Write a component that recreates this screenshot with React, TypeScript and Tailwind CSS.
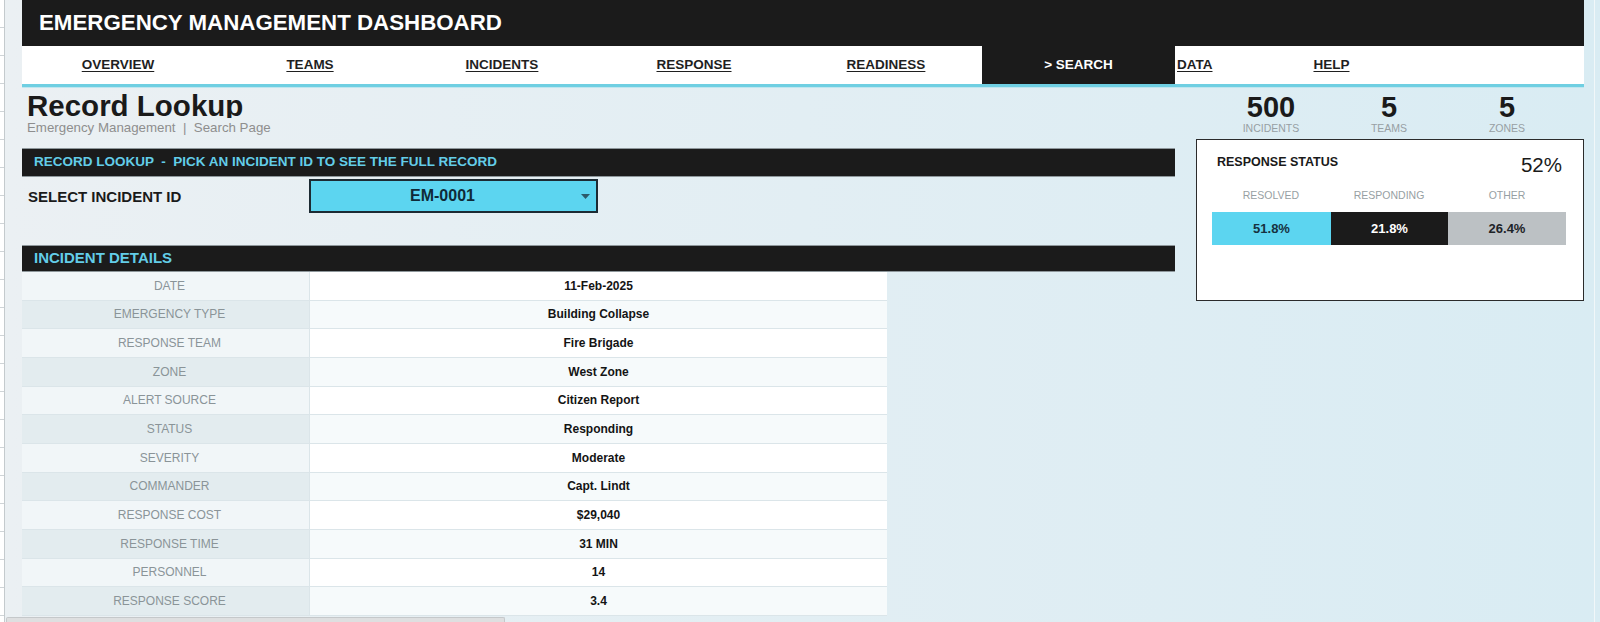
import React from 'react';

const NAV = [
  { label: 'OVERVIEW', w: 'w-[192px]', align: 'justify-center' },
  { label: 'TEAMS', w: 'w-[192px]', align: 'justify-center' },
  { label: 'INCIDENTS', w: 'w-[192px]', align: 'justify-center' },
  { label: 'RESPONSE', w: 'w-[192px]', align: 'justify-center' },
  { label: 'READINESS', w: 'w-[192px]', align: 'justify-center' },
];

const DETAILS = [
  ['DATE', '11-Feb-2025'],
  ['EMERGENCY TYPE', 'Building Collapse'],
  ['RESPONSE TEAM', 'Fire Brigade'],
  ['ZONE', 'West Zone'],
  ['ALERT SOURCE', 'Citizen Report'],
  ['STATUS', 'Responding'],
  ['SEVERITY', 'Moderate'],
  ['COMMANDER', 'Capt. Lindt'],
  ['RESPONSE COST', '$29,040'],
  ['RESPONSE TIME', '31 MIN'],
  ['PERSONNEL', '14'],
  ['RESPONSE SCORE', '3.4'],
];

const KPIS = [
  { value: '500', label: 'INCIDENTS' },
  { value: '5', label: 'TEAMS' },
  { value: '5', label: 'ZONES' },
];

function SectionBar({ title, className }: { title: string; className: string }) {
  return (
    <div
      className={`flex items-center border-y border-[#8e979b] bg-[#1b1b1b] pl-[12px] font-bold text-[#63cde8] whitespace-pre ${className}`}
    >
      {title}
    </div>
  );
}

export default function App() {
  return (
    <div className="relative flex h-[622px] w-[1600px] overflow-hidden bg-[#dcebf1] font-['Liberation_Sans',Arial,sans-serif]">
      {/* spreadsheet gutter */}
      <div className="h-full w-[5px] shrink-0 border-r border-[#c4cacd] bg-white bg-[repeating-linear-gradient(to_bottom,transparent_0px,transparent_27px,#cfd4d7_27px,#cfd4d7_28px)]" />

      <div className="h-full flex-1 bg-linear-to-r from-[#ebf0f3] to-[#d9ecf3]">
        <div className="h-full w-[1590px] border-r border-[#f1f7f9] pl-[17px]">
          <div className="w-[1562px]">
            {/* header */}
            <div className="flex h-[46px] items-center bg-[#1b1b1b] pl-[17px] text-[22.3px] font-bold text-white">
              EMERGENCY MANAGEMENT DASHBOARD
            </div>

            {/* nav */}
            <div className="flex h-[38px] bg-white text-[13.5px] font-bold text-[#1f1f1f]">
              {NAV.map(n => (
                <div key={n.label} className={`flex items-center ${n.w} ${n.align}`}>
                  <span className="underline underline-offset-2">{n.label}</span>
                </div>
              ))}
              <div className="flex w-[193px] items-center justify-center bg-[#1b1b1b] text-white">
                &gt; SEARCH
              </div>
              <div className="flex w-[77px] items-center pl-[2px]">
                <span className="underline underline-offset-2">DATA</span>
              </div>
              <div className="flex w-[159px] items-center justify-center">
                <span className="underline underline-offset-2">HELP</span>
              </div>
              <div className="flex-1" />
            </div>
            <div className="h-[3px] bg-[#6fcfe2]" />
            <div className="h-[1px] bg-[#bfe6ef]" />

            {/* body */}
            <div className="flex">
              {/* left column */}
              <div className="w-[1153px]">
                <div className="h-[30px] overflow-hidden pl-[5px] text-[29.5px] font-bold leading-[36px] text-[#1a1a1a]">
                  Record Lookup
                </div>
                <div className="mt-[2px] h-[16px] pl-[5px] text-[13.3px] leading-[16px] text-[#8e8e8e] whitespace-pre">
                  Emergency Management  |  Search Page
                </div>

                <SectionBar
                  title="RECORD LOOKUP  -  PICK AN INCIDENT ID TO SEE THE FULL RECORD"
                  className="mt-[12px] h-[29px] text-[13.5px]"
                />

                <div className="flex h-[68px] items-start">
                  <div className="flex h-[40px] w-[287px] items-center pl-[6px] text-[15px] font-bold text-[#1a1a1a]">
                    SELECT INCIDENT ID
                  </div>
                  <div className="mt-[2px] flex h-[34px] w-[289px] items-center border-2 border-[#1c2b33] bg-[#5cd5f0]">
                    <div className="flex-1 text-center text-[16px] font-bold text-[#0f2a38]">EM-0001</div>
                    <div className="flex w-[22px] items-center justify-center">
                      <svg width="9" height="5" viewBox="0 0 9 5">
                        <polygon points="0,0 9,0 4.5,5" fill="#2c5a6a" />
                      </svg>
                    </div>
                  </div>
                </div>

                <SectionBar title="INCIDENT DETAILS" className="h-[27px] text-[15px]" />

                <div className="w-[865px]">
                  {DETAILS.map(([label, value], i) => (
                    <div key={label} className="flex h-[28.67px] border-b border-[#dbe5e9]">
                      <div
                        className={`flex w-[288px] items-center justify-center border-r border-[#dbe5e9] pl-[8px] text-[12px] text-[#8a9498] ${
                          i % 2 === 0 ? 'bg-[#f1f6f8]' : 'bg-[#e3ecef]'
                        }`}
                      >
                        {label}
                      </div>
                      <div
                        className={`flex flex-1 items-center justify-center text-[12px] font-bold text-[#141414] ${
                          i % 2 === 0 ? 'bg-white' : 'bg-[#f6fafb]'
                        }`}
                      >
                        {value}
                      </div>
                    </div>
                  ))}
                </div>
              </div>

              {/* right column */}
              <div className="ml-[21px] w-[388px]">
                <div className="ml-[16px] flex w-[354px] pt-[4px]">
                  {KPIS.map(k => (
                    <div key={k.label} className="flex w-[118px] flex-col items-center">
                      <div className="h-[30px] text-[29px] font-bold leading-[30px] text-[#1a1a1a]">{k.value}</div>
                      <div className="h-[12px] text-[10.5px] leading-[12px] text-[#979fa3]">{k.label}</div>
                    </div>
                  ))}
                </div>

                <div className="mt-[5px] h-[162px] border border-[#2b2b2b] bg-white">
                  <div className="mt-[8px] flex h-[28px] items-center justify-between pl-[20px] pr-[21px]">
                    <div className="text-[12.5px] font-bold text-[#1a1a1a]">RESPONSE STATUS</div>
                    <div className="pt-[6px] text-[20.5px] text-[#1a1a1a]">52%</div>
                  </div>
                  <div className="ml-[15px] mt-[12px] flex h-[16px] w-[354px] items-center text-[10.5px] text-[#979fa3]">
                    <div className="w-[118px] text-center">RESOLVED</div>
                    <div className="w-[118px] text-center">RESPONDING</div>
                    <div className="w-[118px] text-center">OTHER</div>
                  </div>
                  <div className="ml-[15px] mt-[8px] flex h-[33px] w-[354px] text-[13px] font-bold">
                    <div className="flex w-[119px] items-center justify-center bg-[#5cd5f0] text-[#163240]">51.8%</div>
                    <div className="flex w-[117px] items-center justify-center bg-[#1b1b1b] text-white">21.8%</div>
                    <div className="flex w-[118px] items-center justify-center bg-[#bcc1c4] text-[#1d2327]">26.4%</div>
                  </div>
                </div>
              </div>
            </div>
          </div>
        </div>
      </div>

      {/* horizontal scrollbar overlay */}
      <div className="absolute bottom-0 left-[6px] h-[5px] w-[499px] rounded-t-[2px] border border-b-0 border-[#c5c8ca] bg-[#dedfe0]" />
    </div>
  );
}
